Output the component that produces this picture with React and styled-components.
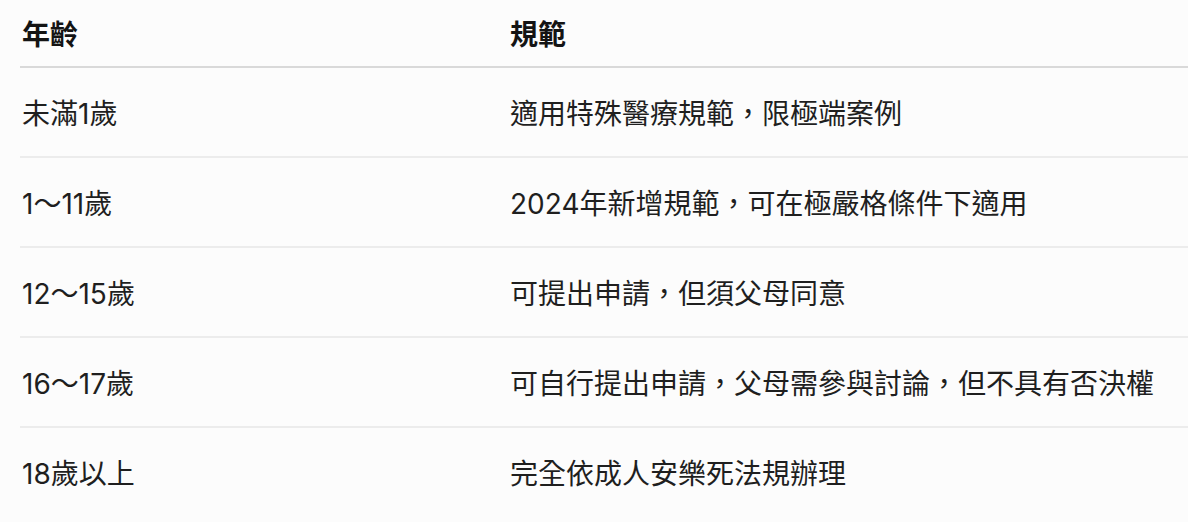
import React from "react";
import styled, { createGlobalStyle } from "styled-components";

const rows = [
  { age: "未滿1歲", rule: "適用特殊醫療規範，限極端案例" },
  { age: "1～11歲", rule: "2024年新增規範，可在極嚴格條件下適用" },
  { age: "12～15歲", rule: "可提出申請，但須父母同意" },
  { age: "16～17歲", rule: "可自行提出申請，父母需參與討論，但不具有否決權" },
  { age: "18歲以上", rule: "完全依成人安樂死法規辦理" },
];

const GlobalStyle = createGlobalStyle`
  html, body {
    margin: 0;
    padding: 0;
    background: #fcfcfc;
  }
  body {
    font-family: "Inter", "Noto Sans CJK TC", sans-serif;
  }
`;

const Page = styled.div`
  padding-left: 20px;
  overflow: hidden;
`;

const Table = styled.table`
  width: 100%;
  border-collapse: collapse;
  table-layout: fixed;
`;

const HeadCell = styled.th`
  width: ${(p) => p.$width || "auto"};
  height: 66px;
  padding: 0 2px;
  text-align: left;
  font-size: 28px;
  font-weight: 700;
  color: #141414;
  border-bottom: 2px solid #d9d9d9;
  vertical-align: middle;
`;

const Row = styled.tr`
  & + & td {
    border-top: 2px solid #ececec;
  }
`;

const Cell = styled.td`
  height: 88px;
  padding: 0 2px;
  font-size: 28px;
  font-weight: 400;
  color: #1f1f1f;
  vertical-align: middle;
  white-space: nowrap;
`;

const App = () => {
  return (
    <>
      <GlobalStyle />
      <Page>
        <Table>
          <thead>
            <tr>
              <HeadCell $width="484px">年齡</HeadCell>
              <HeadCell>規範</HeadCell>
            </tr>
          </thead>
          <tbody>
            {rows.map((r) => (
              <Row key={r.age}>
                <Cell>{r.age}</Cell>
                <Cell>{r.rule}</Cell>
              </Row>
            ))}
          </tbody>
        </Table>
      </Page>
    </>
  );
};

export default App;
